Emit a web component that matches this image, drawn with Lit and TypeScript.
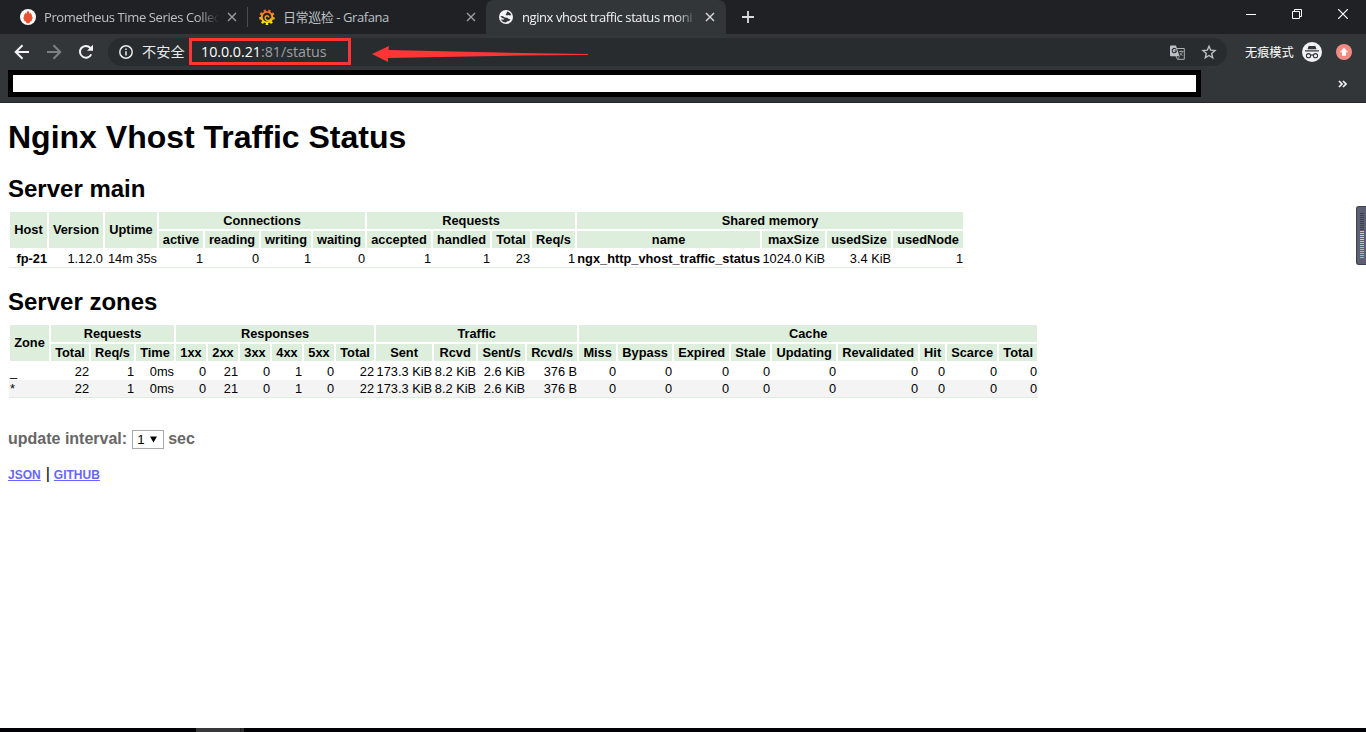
import { LitElement, html, css, svg } from 'lit';
import { customElement, property } from 'lit/decorators.js';
import { classMap } from 'lit/directives/class-map.js';

interface Group {
  label: string;
  columns?: string[];
}

const MAIN_GROUPS: Group[] = [
  { label: 'Host' },
  { label: 'Version' },
  { label: 'Uptime' },
  { label: 'Connections', columns: ['active', 'reading', 'writing', 'waiting'] },
  { label: 'Requests', columns: ['accepted', 'handled', 'Total', 'Req/s'] },
  { label: 'Shared memory', columns: ['name', 'maxSize', 'usedSize', 'usedNode'] },
];
const MAIN_WIDTHS = [39, 56, 54, 46, 56, 52, 54, 66, 59, 40, 45, 185, 65, 66, 72];
const MAIN_ROWS = [
  ['fp-21', '1.12.0', '14m 35s', '1', '0', '1', '0', '1', '1', '23', '1',
    'ngx_http_vhost_traffic_status', '1024.0 KiB', '3.4 KiB', '1'],
];

const ZONE_GROUPS: Group[] = [
  { label: 'Zone' },
  { label: 'Requests', columns: ['Total', 'Req/s', 'Time'] },
  { label: 'Responses', columns: ['1xx', '2xx', '3xx', '4xx', '5xx', 'Total'] },
  { label: 'Traffic', columns: ['Sent', 'Rcvd', 'Sent/s', 'Rcvd/s'] },
  {
    label: 'Cache',
    columns: ['Miss', 'Bypass', 'Expired', 'Stale', 'Updating', 'Revalidated', 'Hit', 'Scarce', 'Total'],
  },
];
const ZONE_WIDTHS = [41, 40, 45, 40, 32, 32, 32, 32, 32, 40, 58, 44, 49, 52, 39, 56, 57, 41, 66, 82, 27, 52, 40];
const ZONE_VALUES = ['22', '1', '0ms', '0', '21', '0', '1', '0', '22', '173.3 KiB', '8.2 KiB', '2.6 KiB',
  '376 B', '0', '0', '0', '0', '0', '0', '0', '0', '0'];
const ZONE_ROWS = [['_', ...ZONE_VALUES], ['*', ...ZONE_VALUES]];

@customElement('status-table')
export class StatusTable extends LitElement {
  @property({ attribute: false }) groups: Group[] = [];
  @property({ attribute: false }) widths: number[] = [];
  @property({ attribute: false }) rows: string[][] = [];
  @property({ attribute: false }) strong: number[] = [];
  @property({ type: Boolean }) keyed = false;

  static styles = css`
    :host { display: block; }

    table {
      table-layout: fixed;
      border-collapse: separate;
      border-spacing: 0;
      margin-left: 1px;
      border-bottom: 1px solid #ddeedd;
      font: 12.8px/15px "Liberation Sans", Arial, sans-serif;
      color: #000;
    }

    th {
      height: 17px;
      padding: 0;
      border: 1px solid #fff;
      background: #ddeedd;
      background-clip: padding-box;
      white-space: nowrap;
    }

    th[rowspan] { padding-bottom: 2px; }

    td {
      height: 17px;
      padding: 0 1px;
      text-align: right;
      white-space: nowrap;
    }

    tbody tr:first-child td { height: 18px; }
    tbody tr:nth-child(even) { background: #f4f4f4; }
    .key { text-align: left; }
    .strong { font-weight: bold; }
  `;

  render() {
    const total = this.widths.reduce((a, b) => a + b, 0);
    return html`
      <table style="width:${total}px">
        <colgroup>${this.widths.map((w) => html`<col style="width:${w}px">`)}</colgroup>
        <thead>
          <tr>
            ${this.groups.map((g) => g.columns
              ? html`<th colspan=${g.columns.length}>${g.label}</th>`
              : html`<th rowspan="2">${g.label}</th>`)}
          </tr>
          <tr>${this.groups.flatMap((g) => g.columns ?? []).map((c) => html`<th>${c}</th>`)}</tr>
        </thead>
        <tbody>
          ${this.rows.map((row) => html`
            <tr>
              ${row.map((v, i) => html`<td class=${classMap({
                key: this.keyed && i === 0,
                strong: this.strong.includes(i),
              })}>${v}</td>`)}
            </tr>`)}
        </tbody>
      </table>
    `;
  }
}

const closeIcon = html`
  <svg class="close" width="10" height="10" viewBox="0 0 10 10">
    <path d="M1 1l8 8M9 1l-8 8" stroke="currentColor" stroke-width="1.4" fill="none"/>
  </svg>`;

const prometheusIcon = html`
  <svg width="16" height="16" viewBox="0 0 16 16">
    <circle cx="8" cy="8" r="8" fill="#fff"/>
    <path fill="#e6522c" d="M8 1.3c.4 1.4 1.7 2.2 1.8 3.7.5-.4.6-.9.6-1.4 1.200 1.500 1.900 3 1.500 4.800l1-.3c-.2 1-.5 1.700-.9 2.700H4c-.4-1-.7-1.700-.9-2.700l1 .3c-.4-1.800.3-3.300 1.500-4.800 0 .5.1 1 .6 1.400.1-1.500 1.400-2.300 1.800-3.700zM4.300 10.800h7.400v1.500H4.300zM5.800 12.300h4.400c-.3 1.500-1.200 2.200-2.200 2.200s-1.900-.7-2.200-2.200z"/>
  </svg>`;

const grafanaIcon = html`
  <svg width="16" height="16" viewBox="0 0 16 16">
    <defs>
      <linearGradient id="gf" gradientUnits="userSpaceOnUse" x1="0" y1="15" x2="0" y2="1">
        <stop offset="0" stop-color="#fff100"/>
        <stop offset="1" stop-color="#f05a28"/>
      </linearGradient>
    </defs>
    <g fill="none" stroke="url(#gf)">
      <circle cx="8" cy="8.200" r="6.600" stroke-width="2.400" stroke-dasharray="2.300 2.300"/>
      <circle cx="8" cy="8.200" r="5.300" stroke-width="1.900"/>
      <path stroke-width="1.400" d="M12 9.500c-.8 1.700-2.700 2.500-4.400 1.700C5.800 10.300 5.600 7.800 7.300 7c1.300-.6 2.700.3 2.400 1.500"/>
    </g>
  </svg>`;

const globeIcon = html`
  <svg width="14" height="14" viewBox="0 0 14 14">
    <circle cx="7" cy="7" r="7" fill="#f1f3f4"/>
    <path fill="#323639" d="M8.200 1.500C10 1.900 11.500 3 12.300 4.900L10.900 5.500 9.200 5 8 5.600 6.600 4.700 7.400 3.500z"/>
    <path fill="#323639" d="M1.400 6l2.600.2 1.800 1.200 2.600.3 1.300 1.300 1.800.2-1.300 1.700-1.900.3-1.300 1.300C4.500 12.400 2.800 11.500 1.900 9.500L4.600 9.700 5.300 8.800 3 7.900z"/>
  </svg>`;

const marks = svg`
  <rect x="190.500" y="39.500" width="159" height="24" fill="none" stroke="#fd3535" stroke-width="3"/>
  <path fill="#fd3535" d="M372 54L389 46L388.500 50L520 52.900L588 54.100V54.900L520 55.500L388 58L388 62Z"/>`;

// Level bars of the floating meter on the right edge, top to bottom.
const METER = ['#3d4150', '#3d4150', '#3d4150', '#3d4150', '#3d4150', '#3d4150', '#3d4150', '#3d4150', '#3d4150',
  '#f0c84b', '#ecd64a', '#e4e04e', '#d3e45a', '#bfe468', '#abe274', '#9be27d', '#8ae28a', '#7ae29a', '#6ce2a8',
  '#60e2b6', '#55e2c4', '#4ce2ce', '#45e0d6'];

@customElement('app-root')
export class AppRoot extends LitElement {
  static styles = css`
    :host {
      display: flex;
      flex-direction: column;
      position: relative;
      width: 1366px;
      height: 732px;
      overflow: hidden;
      background: #fff;
      color: #000;
      font-family: "Liberation Sans", Arial, sans-serif;
    }

    svg { display: block; flex: none; }

    .tabs {
      display: flex;
      height: 34px;
      flex: none;
      background: #202124;
      color: #bdc1c6;
      font: 13px/34px "Open Sans", "Noto Sans CJK SC", sans-serif;
    }

    .tab {
      display: flex;
      align-items: center;
      box-sizing: border-box;
      height: 34px;
    }

    .tab .close { margin-left: 8px; color: #9aa0a6; }
    .first { width: 248px; padding-left: 20px; }
    .first .title { width: 175px; letter-spacing: -.38px; }
    .second { width: 238px; padding-left: 11px; }
    .second .title { width: 175px; letter-spacing: -.42px; }
    .first::after {
      content: "";
      width: 1px;
      height: 20px;
      margin-left: 10px;
      background: #4a4c50;
    }

    .title {
      margin-left: 8px;
      white-space: nowrap;
    }

    .fade {
      -webkit-mask-image: linear-gradient(to right, #000 88%, transparent);
      mask-image: linear-gradient(to right, #000 88%, transparent);
    }

    .active {
      width: 240px;
      padding-left: 13px;
      border-radius: 8px 8px 0 0;
      background: #323639;
      color: #f1f3f4;
    }

    .active .title { width: 175px; margin-left: 9px; letter-spacing: -.42px; }
    .active .close { color: #dadce0; }
    .plus { margin: 11px 0 0 16px; }

    .window {
      display: flex;
      gap: 36px;
      margin: 9px 18px 0 auto;
      height: 10px;
    }

    .toolbar {
      display: flex;
      align-items: center;
      height: 36px;
      flex: none;
      background: #323639;
    }

    .nav {
      display: flex;
      gap: 16px;
      width: 94px;
      padding-left: 14px;
      align-items: center;
    }

    .omnibox {
      display: flex;
      align-items: center;
      box-sizing: border-box;
      width: 1119px;
      height: 28px;
      padding: 0 10px 0 11px;
      border-radius: 14px;
      background: #282c2f;
      font: 14.300px/28px "Open Sans", "Noto Sans CJK SC", sans-serif;
      color: #9aa0a6;
    }

    .insecure {
      width: 59px;
      margin-left: 9px;
      color: #e8eaed;
      font-size: 14.200px;
      white-space: nowrap;
    }

    .url { flex: 1; letter-spacing: -.04px; white-space: nowrap; }
    .host { color: #fff; }
    .star { margin-left: 16px; }

    .incognito {
      margin: 0 8px 0 18px;
      width: 49px;
      color: #fff;
      font: 12.200px/28px "Noto Sans CJK SC", sans-serif;
      white-space: nowrap;
    }

    .update { margin-left: 14px; }

    .bookmarks {
      display: flex;
      box-sizing: border-box;
      height: 33px;
      flex: none;
      padding-left: 8px;
      background: #323639;
      border-bottom: 1px solid #25272a;
    }

    .redacted {
      box-sizing: border-box;
      width: 1193px;
      height: 27px;
      border: 5px solid #000;
      background: #fff;
    }

    .more { margin: 10px 0 0 137px; }

    .page { flex: 1; padding: 16px 8px 0; }
    h1, h2 { margin: 0; }
    h1 { font-size: 32px; line-height: 37px; margin-bottom: 19px; }
    h2 { font-size: 24px; line-height: 28px; margin-bottom: 8px; }
    .zones { margin-top: 20px; }

    .interval {
      display: flex;
      align-items: center;
      gap: 4px;
      height: 20px;
      margin-top: 31px;
      color: #666;
      font-size: 16px;
      font-weight: bold;
    }

    .select {
      display: flex;
      align-items: center;
      justify-content: space-between;
      box-sizing: border-box;
      width: 32px;
      height: 19px;
      margin: 1px 0 0 1px;
      padding: 0 6px 0 4px;
      border: 1px solid #a9a9a9;
      color: #000;
      font-size: 13.300px;
      font-weight: normal;
    }

    .links {
      display: flex;
      align-items: baseline;
      margin-top: 16px;
      font-size: 16px;
      line-height: 18px;
    }

    .links a {
      color: #6666ff;
      font-size: 12px;
      font-weight: bold;
    }

    .bar { margin: 0 4px 0 5px; }

    .taskbar {
      display: flex;
      height: 4px;
      flex: none;
      padding-left: 196px;
      background: #020206;
    }

    .task { width: 44px; background: #38383b; border-right: 1px solid #1c1c1e; }
    .task-end { width: 3px; background: #2c2c2f; }

    .marks { position: absolute; left: 0; top: 0; }

    .meter {
      position: absolute;
      right: 0;
      top: 206px;
      display: flex;
      flex-direction: column;
      gap: 1px;
      box-sizing: border-box;
      width: 10px;
      height: 59px;
      padding: 6px 2px 0 3px;
      border: 1px solid #3d4150;
      border-right: 0;
      border-radius: 3px 0 0 3px;
      background: #5c6072;
    }

    .level { height: 1px; width: 4px; flex: none; }
  `;

  _tabs() {
    return html`
      <div class="tabs">
        <div class="tab first">${prometheusIcon}<div class="title fade">Prometheus Time Series Collec</div>${closeIcon}</div>
        <div class="tab second">${grafanaIcon}<div class="title">日常巡检 - Grafana</div>${closeIcon}</div>
        <div class="tab active">${globeIcon}<div class="title fade">nginx vhost traffic status moni</div>${closeIcon}</div>
        <svg class="plus" width="12" height="12" viewBox="0 0 12 12">
          <path d="M6 0v12M0 6h12" stroke="#dadce0" stroke-width="1.800"/>
        </svg>
        <div class="window">
          <svg width="10" height="10"><path d="M0 5.500h10" stroke="#fff"/></svg>
          <svg width="10" height="10"><path d="M.5 2.500h7v7h-7zM2.500 2.500v-2h7v7h-2" fill="none" stroke="#fff"/></svg>
          <svg width="10" height="10"><path d="M0 0l10 10M10 0L0 10" stroke="#fff" stroke-width="1.200"/></svg>
        </div>
      </div>
    `;
  }

  _toolbar() {
    return html`
      <div class="toolbar">
        <div class="nav">
          <svg width="16" height="16" viewBox="0 0 16 16"><path d="M15 8H2M8.500 1.200L1.700 8l6.800 6.800" fill="none" stroke="#f1f3f4" stroke-width="2"/></svg>
          <svg width="16" height="16" viewBox="0 0 16 16"><path d="M1 8h13M7.500 1.200L14.300 8l-6.800 6.800" fill="none" stroke="#7d8184" stroke-width="2"/></svg>
          <svg width="16" height="16" viewBox="0 0 16 16">
            <path d="M13.200 10.300A5.900 5.900 0 1 1 12.200 3.800L13.500 5.100" fill="none" stroke="#f1f3f4" stroke-width="2"/>
            <path d="M15 .8v6H9z" fill="#f1f3f4"/>
          </svg>
        </div>
        <div class="omnibox">
          <svg width="14" height="14" viewBox="0 0 14 14">
            <circle cx="7" cy="7" r="6.200" fill="none" stroke="#e8eaed" stroke-width="1.500"/>
            <path d="M7 6.200v4.300M7 3.500V5" stroke="#e8eaed" stroke-width="1.500"/>
          </svg>
          <span class="insecure">不安全</span>
          <span class="url"><span class="host">10.0.0.21</span>:81/status</span>
          <svg width="15" height="15" viewBox="0 0 15 15">
            <path d="M6 3.500h8.300v10.800H7.500L6 11" fill="none" stroke="#aeb2b6"/>
            <path d="M1 .5h5l3.500 10.800H1a1 1 0 0 1-1-1V1.500a1 1 0 0 1 1-1z" fill="#bdc1c6"/>
            <path d="M6.300 4.600A2.200 2.200 0 1 0 6.500 6H4.600" fill="none" stroke="#282c2f" stroke-width="1.100"/>
            <path d="M9 6.500h4.500M11 5.300v1.200M12.500 6.500c-.3 1.800-1.400 3-2.700 4M10 8c.7 1.200 1.500 2 2.700 2.700M9.500 11.300l-1.500 2.500" fill="none" stroke="#aeb2b6" stroke-width=".8"/>
          </svg>
          <svg class="star" width="16" height="16" viewBox="0 0 16 16">
            <path d="M8 2.200l1.700 4 4.300.4-3.300 2.900 1 4.300L8 11.500l-3.700 2.300 1-4.300L2 6.600l4.300-.4z" fill="none" stroke="#bdc1c6" stroke-width="1.400"/>
          </svg>
        </div>
        <span class="incognito">无痕模式</span>
        <svg width="20" height="20" viewBox="0 0 20 20">
          <circle cx="10" cy="10" r="10" fill="#f1f3f4"/>
          <path d="M6.700 3.700q3.300.8 6.600 0l1.200 3.500h-9zM3 8.300h14v1.200H3z" fill="#323639"/>
          <g fill="none" stroke="#323639" stroke-width="1.100">
            <circle cx="6.500" cy="13.700" r="2.100"/>
            <circle cx="13.500" cy="13.700" r="2.100"/>
            <path d="M8.600 13.300q1.400-.8 2.800 0"/>
          </g>
        </svg>
        <svg class="update" width="16" height="16" viewBox="0 0 16 16">
          <circle cx="8" cy="8" r="8" fill="#f28b82"/>
          <path d="M8 3.800L12.200 8.200H10v3.500H6V8.200H3.800z" fill="#fff"/>
        </svg>
      </div>
      <div class="bookmarks">
        <div class="redacted"></div>
        <svg class="more" width="9" height="8" viewBox="0 0 9 8">
          <path d="M1 1l3 3-3 3M5 1l3 3-3 3" fill="none" stroke="#f1f3f4" stroke-width="1.700"/>
        </svg>
      </div>
    `;
  }

  render() {
    return html`
      ${this._tabs()}
      ${this._toolbar()}
      <div class="page">
        <h1>Nginx Vhost Traffic Status</h1>
        <h2>Server main</h2>
        <status-table .groups=${MAIN_GROUPS} .widths=${MAIN_WIDTHS} .rows=${MAIN_ROWS} .strong=${[0, 11]}></status-table>
        <h2 class="zones">Server zones</h2>
        <status-table .groups=${ZONE_GROUPS} .widths=${ZONE_WIDTHS} .rows=${ZONE_ROWS} keyed></status-table>
        <div class="interval">
          <span>update interval:</span>
          <span class="select">1
            <svg width="7" height="7" viewBox="0 0 7 7"><path d="M0 .5h7L3.500 6.500z"/></svg>
          </span>
          <span>sec</span>
        </div>
        <div class="links"><a href="#json">JSON</a><span class="bar">|</span><a href="#github">GITHUB</a></div>
      </div>
      <div class="taskbar"><div class="task"></div><div class="task-end"></div></div>
      <svg class="marks" width="600" height="70">${marks}</svg>
      <div class="meter">${METER.map((c) => html`<div class="level" style="background:${c}"></div>`)}</div>
    `;
  }
}
